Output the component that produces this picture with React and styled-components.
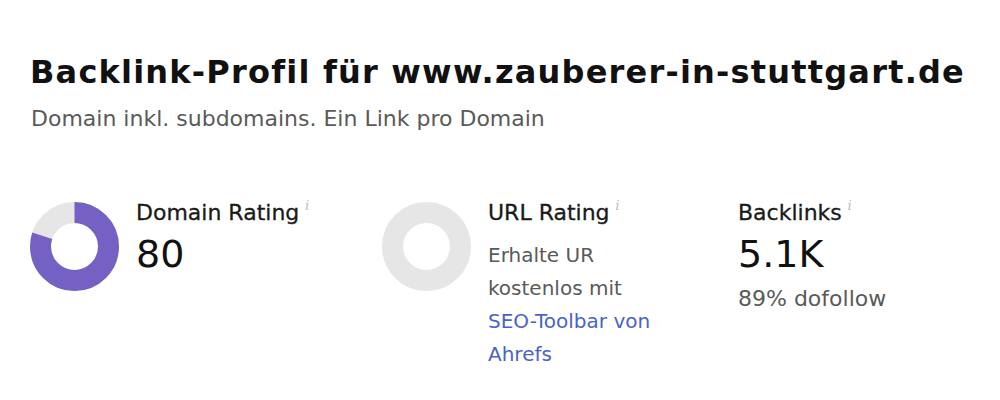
import React from "react";
import styled, { createGlobalStyle } from "styled-components";

const Global = createGlobalStyle`
  html, body { margin: 0; padding: 0; background: #fff; }
  body { font-family: "DejaVu Sans", "Noto Sans", sans-serif; color: #111; }
`;

const Page = styled.div`
  width: 1000px;
  height: 400px;
  box-sizing: border-box;
  padding: 52px 0 0 30px;
  overflow: hidden;
`;

const Title = styled.h1`
  margin: 0;
  font-family: "DejaVu Sans", sans-serif;
  font-weight: 700;
  font-size: 32px;
  line-height: 40px;
  letter-spacing: 1.2px;
  color: #111;
  white-space: nowrap;
`;

const Subtitle = styled.p`
  margin: 13px 0 0 1px;
  font-size: 22px;
  line-height: 28px;
  color: #5a5a5a;
`;

const Metrics = styled.div`
  display: grid;
  grid-template-columns: 352px 356px 220px;
  margin-top: 66px;
`;

const Metric = styled.div`
  display: flex;
  align-items: flex-start;
  gap: 17px;
`;

const DonutBox = styled.div`
  flex: none;
  width: 89px;
  height: 89px;
  margin-top: 3px;
`;

const Body = styled.div`
  display: flex;
  flex-direction: column;
`;

const Label = styled.div`
  font-size: 22px;
  line-height: 28px;
  color: #1a1a1a;
  display: flex;
  align-items: flex-start;
  -webkit-text-stroke: 0.3px #1a1a1a;
`;

const Info = styled.span`
  font-size: 12px;
  line-height: 12px;
  color: #b8b8b8;
  margin-left: 6px;
  margin-top: 1px;
  font-family: "DejaVu Serif", serif;
  font-style: italic;
  -webkit-text-stroke: 0;
`;

const Value = styled.div`
  font-size: 38px;
  line-height: 44px;
  color: #111;
  margin-top: 5px;
`;

const Note = styled.div`
  font-size: ${(p) => p.$size || 20}px;
  line-height: ${(p) => p.$lh || 33}px;
  color: #5a5a5a;
  max-width: 195px;
  margin-top: ${(p) => p.$mt || 0}px;
`;

const Link = styled.a`
  color: #4b63c6;
  text-decoration: none;
`;

const NoWrap = styled.span`
  white-space: nowrap;
`;

function Donut({ value }) {
  const r = 34;
  const c = 2 * Math.PI * r;
  const frac = value / 100;
  return (
    <svg width="89" height="89" viewBox="0 0 89 89">
      <circle cx="44.5" cy="44.5" r={r} fill="none" stroke="#e6e6e6" strokeWidth="21" />
      {value > 0 && (
        <circle
          cx="44.5"
          cy="44.5"
          r={r}
          fill="none"
          stroke="#7560c4"
          strokeWidth="21"
          strokeDasharray={`${c * frac} ${c}`}
          transform="rotate(-90 44.5 44.5)"
        />
      )}
    </svg>
  );
}

export default function App() {
  return (
    <>
      <Global />
      <Page>
        <Title>Backlink-Profil für www.zauberer-in-stuttgart.de</Title>
        <Subtitle>Domain inkl. subdomains. Ein Link pro Domain</Subtitle>
        <Metrics>
          <Metric>
            <DonutBox>
              <Donut value={80} />
            </DonutBox>
            <Body>
              <Label>
                Domain Rating<Info>i</Info>
              </Label>
              <Value>80</Value>
            </Body>
          </Metric>
          <Metric>
            <DonutBox>
              <Donut value={0} />
            </DonutBox>
            <Body>
              <Label>
                URL Rating<Info>i</Info>
              </Label>
              <Note $mt={12}>
                Erhalte UR kostenlos mit{" "}
                <Link href="#">
                  <NoWrap>SEO-Toolbar</NoWrap> von Ahrefs
                </Link>
              </Note>
            </Body>
          </Metric>
          <Metric>
            <Body>
              <Label>
                Backlinks<Info>i</Info>
              </Label>
              <Value>5.1K</Value>
              <Note $mt={9} $size={22} $lh={28}>89% dofollow</Note>
            </Body>
          </Metric>
        </Metrics>
      </Page>
    </>
  );
}
